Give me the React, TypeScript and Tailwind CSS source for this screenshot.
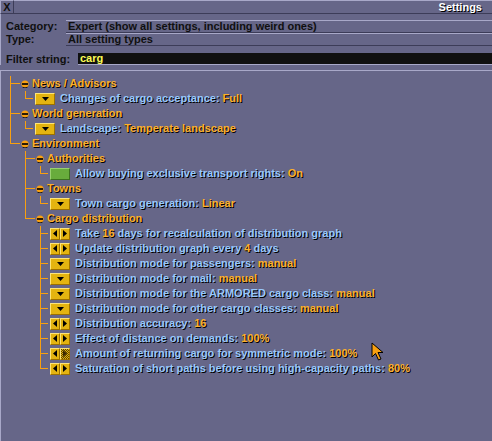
import React from 'react';

type Ctrl = 'dropdown' | 'arrows' | 'arrowsMax' | 'bool';

type Row = {
  guides: boolean[];
  last: boolean;
  cat?: string;
  ctrl?: Ctrl;
  before?: string;
  value?: string;
  after?: string;
};

const rows: Row[] = [
  { guides: [], last: false, cat: 'News / Advisors' },
  { guides: [true], last: true, ctrl: 'dropdown', before: 'Changes of cargo acceptance: ', value: 'Full' },
  { guides: [], last: false, cat: 'World generation' },
  { guides: [true], last: true, ctrl: 'dropdown', before: 'Landscape: ', value: 'Temperate landscape' },
  { guides: [], last: true, cat: 'Environment' },
  { guides: [false], last: false, cat: 'Authorities' },
  { guides: [false, true], last: true, ctrl: 'bool', before: 'Allow buying exclusive transport rights: ', value: 'On' },
  { guides: [false], last: false, cat: 'Towns' },
  { guides: [false, true], last: true, ctrl: 'dropdown', before: 'Town cargo generation: ', value: 'Linear' },
  { guides: [false], last: true, cat: 'Cargo distribution' },
  { guides: [false, false], last: false, ctrl: 'arrows', before: 'Take ', value: '16', after: ' days for recalculation of distribution graph' },
  { guides: [false, false], last: false, ctrl: 'arrows', before: 'Update distribution graph every ', value: '4', after: ' days' },
  { guides: [false, false], last: false, ctrl: 'dropdown', before: 'Distribution mode for passengers: ', value: 'manual' },
  { guides: [false, false], last: false, ctrl: 'dropdown', before: 'Distribution mode for mail: ', value: 'manual' },
  { guides: [false, false], last: false, ctrl: 'dropdown', before: 'Distribution mode for the ARMORED cargo class: ', value: 'manual' },
  { guides: [false, false], last: false, ctrl: 'dropdown', before: 'Distribution mode for other cargo classes: ', value: 'manual' },
  { guides: [false, false], last: false, ctrl: 'arrows', before: 'Distribution accuracy: ', value: '16' },
  { guides: [false, false], last: false, ctrl: 'arrows', before: 'Effect of distance on demands: ', value: '100%' },
  { guides: [false, false], last: false, ctrl: 'arrowsMax', before: 'Amount of returning cargo for symmetric mode: ', value: '100%' },
  { guides: [false, false], last: true, ctrl: 'arrows', before: 'Saturation of short paths before using high-capacity paths: ', value: '80%' },
];

const bevel = 'border-t border-l border-t-[#fce47c] border-l-[#fce47c] border-b border-r border-b-[#9c7000] border-r-[#9c7000]';

const Guide = ({ on }: { on: boolean }) => (
  <div className="flex w-[15px] h-full shrink-0">
    <div className="w-[10px]" />
    {on && <div className="h-full border-l border-[#f8a010]" />}
  </div>
);

const Connector = ({ last, cat }: { last: boolean; cat: boolean }) => (
  <div className="flex h-full shrink-0">
    <div className="w-[10px]" />
    <div className={cat ? 'flex flex-col w-[10px]' : 'flex flex-col w-[8px]'}>
      <div className="h-[8px] border-l border-b border-[#f8a010]" />
      {!last && <div className="flex-1 border-l border-[#f8a010]" />}
    </div>
  </div>
);

const Minus = () => (
  <svg width="8" height="8" viewBox="0 0 8 8" className="ml-[1px] shrink-0">
    <circle cx="4" cy="4" r="3.6" fill="#f8a010" />
    <path d="M1.5 7.2 Q4 8.6 6.5 7.2" stroke="#000" strokeWidth="0.8" fill="none" />
    <rect x="1" y="3" width="6" height="2" fill="#2c1c00" />
  </svg>
);

const Half = ({ dir, hatched }: { dir: 'l' | 'r'; hatched?: boolean }) => (
  <div
    className={
      hatched
        ? `w-[10px] h-[12px] flex items-center justify-center ${bevel} bg-[repeating-conic-gradient(#e4b410_0_25%,#5c4400_0_50%)] bg-[length:2px_2px]`
        : `w-[10px] h-[12px] flex items-center justify-center ${bevel} bg-[#e4b410]`
    }
  >
    <svg width="4" height="7" viewBox="0 0 4 7">
      {dir === 'l' ? <path d="M4 0 L0 3.5 L4 7 Z" fill={hatched ? '#3a2800' : '#000'} /> : <path d="M0 0 L4 3.5 L0 7 Z" fill={hatched ? '#3a2800' : '#000'} />}
    </svg>
  </div>
);

const Control = ({ kind }: { kind: Ctrl }) => {
  if (kind === 'bool') {
    return <div className="ml-[2px] w-[20px] h-[12px] shrink-0 bg-[#68ac3c] border border-t-[#98d070] border-l-[#98d070] border-b-[#3c7020] border-r-[#3c7020]" />;
  }
  if (kind === 'dropdown') {
    return (
      <div className={`ml-[2px] w-[20px] h-[12px] shrink-0 flex items-center justify-center bg-[#e4b410] ${bevel}`}>
        <svg width="7" height="4" viewBox="0 0 7 4">
          <path d="M0 0 L7 0 L3.5 4 Z" fill="#000" />
        </svg>
      </div>
    );
  }
  return (
    <div className="ml-[2px] flex shrink-0">
      <Half dir="l" />
      <Half dir="r" hatched={kind === 'arrowsMax'} />
    </div>
  );
};

const shadow = '[text-shadow:1px_1px_0_#000]';

export default function App() {
  return (
    <div className="relative w-[492px] h-[441px] overflow-hidden bg-[#666688] font-['Liberation_Sans',Arial,sans-serif] font-bold text-[11px] leading-none">
      {/* Title bar */}
      <div className="flex h-[14px]">
        <div className="w-[14px] h-[14px] flex items-center justify-center border border-t-[#a8a8c8] border-l-[#a8a8c8] border-b-[#3c3c58] border-r-[#3c3c58] text-[#101010]">
          X
        </div>
        <div className={`flex-1 flex items-center justify-end pr-[10px] border-t border-b border-t-[#a8a8c8] border-b-[#3c3c58] text-white ${shadow}`}>
          Settings
        </div>
      </div>

      {/* Top controls */}
      <div className="border-l border-[#a8a8c8] pt-[6px] text-[#101010]">
        <div className="flex h-[13px]">
          <div className="w-[65px] pl-[5px] flex items-center">Category:</div>
          <div className="flex-1 flex items-center pl-[2px] border-t border-b border-t-[#a8a8c8] border-b-[#3c3c58]">
            Expert (show all settings, including weird ones)
          </div>
        </div>
        <div className="flex h-[13px]">
          <div className="w-[65px] pl-[5px] flex items-center">Type:</div>
          <div className="flex-1 flex items-center pl-[2px] border-t border-b border-t-[#a8a8c8] border-b-[#3c3c58]">
            All setting types
          </div>
        </div>
        <div className="flex h-[12px] mt-[7px]">
          <div className="w-[77px] pl-[5px] flex items-center">Filter string:</div>
          <div className="flex-1 flex items-center pl-[2px] bg-[#101010] text-[#fcfc54] border-b border-[#a8a8c8]">carg</div>
        </div>
      </div>

      {/* Settings tree */}
      <div className="mt-[5px] h-[372px] border-t border-l border-b border-t-[#a8a8c8] border-l-[#a8a8c8] border-b-[#3c3c58] pt-[5px]">
        <div className="-ml-px">
          {rows.map((r, i) => (
            <div key={i} className="flex items-center h-[15px]">
              {r.guides.map((g, j) => (
                <Guide key={j} on={g} />
              ))}
              <Connector last={r.last} cat={!!r.cat} />
              {r.cat ? (
                <>
                  <Minus />
                  <span className={`ml-[3px] text-[#fcb02c] whitespace-nowrap ${shadow}`}>{r.cat}</span>
                </>
              ) : (
                <>
                  <Control kind={r.ctrl!} />
                  <span className={`ml-[5px] text-[#98c8fc] whitespace-nowrap ${shadow}`}>
                    {r.before}
                    <span className="text-[#fcb02c]">{r.value}</span>
                    {r.after}
                  </span>
                </>
              )}
            </div>
          ))}
        </div>
      </div>

      {/* Mouse cursor */}
      <svg width="14" height="19" viewBox="0 0 14 19" className="absolute left-[371px] top-[342px]">
        <path d="M1 1 L1 15 L4.5 11.5 L7.5 18 L10 17 L7 10.5 L12 10.5 Z" fill="#f8a010" stroke="#000" strokeWidth="1" />
      </svg>
    </div>
  );
}
